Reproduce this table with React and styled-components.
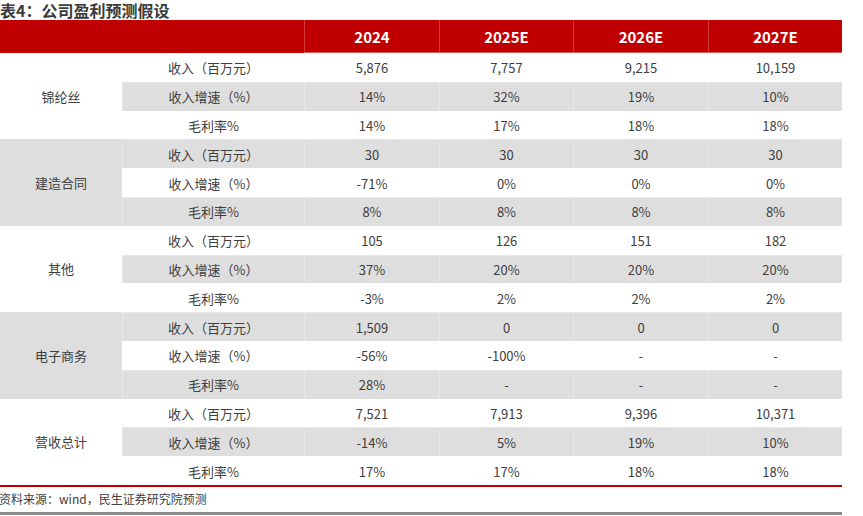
import React from "react";
import styled, { createGlobalStyle } from "styled-components";

const GlobalStyle = createGlobalStyle`
	html, body {
		margin: 0;
		padding: 0;
		background: #ffffff;
	}
	body {
		font-family: "Noto Sans CJK SC", "Noto Sans", sans-serif;
		color: #404040;
	}
`;

const GREY = "#dedede";
const RED = "#c00000";

const Page = styled.div`
	width: 842px;
	display: flex;
	flex-direction: column;
`;

const Title = styled.div`
	height: 20px;
	display: flex;
	align-items: center;
	font-size: 16px;
	line-height: 1;
	font-weight: 700;
	color: #3a3a3a;
	white-space: nowrap;
`;

const Grid = styled.div`
	display: grid;
	grid-template-columns: 122px 182px 135px 134px 135px 134px;
	grid-template-rows: 33px repeat(15, 28.8px);
	border-bottom: 2px solid ${RED};
`;

const HeadCell = styled.div`
	background: ${RED};
	color: #ffffff;
	font-size: 15px;
	font-weight: 700;
	display: flex;
	align-items: center;
	justify-content: center;
	border-left: ${props => (props.first ? "none" : "1px solid #d23a3a")};
	border-bottom: ${props => (props.first ? "none" : "1px solid #e06060")};
`;

const GroupCell = styled.div`
	grid-row: span 3;
	background: ${props => (props.shade ? GREY : "#ffffff")};
	font-size: 13px;
	display: flex;
	align-items: center;
	justify-content: center;
`;

const Cell = styled.div`
	background: ${props => (props.shade ? GREY : "#ffffff")};
	font-size: 13px;
	display: flex;
	align-items: center;
	justify-content: center;
	border-left: 1px solid ${props => (props.shade ? "#e6e6e6" : "#ffffff")};
	border-top: 1px solid ${props => (props.shade ? "#e8e8e8" : "#ffffff")};
	box-sizing: border-box;
	white-space: nowrap;
`;

const Source = styled.div`
	height: 25px;
	line-height: 24px;
	margin-left: -1px;
	font-size: 12px;
	color: #404040;
	white-space: nowrap;
`;

const BottomRule = styled.div`
	height: 3px;
	background: #8c8c8c;
`;

const years = ["2024", "2025E", "2026E", "2027E"];
const metrics = ["收入（百万元）", "收入增速（%）", "毛利率%"];

const groups = [
	{
		name: "锦纶丝",
		rows: [
			["5,876", "7,757", "9,215", "10,159"],
			["14%", "32%", "19%", "10%"],
			["14%", "17%", "18%", "18%"],
		],
	},
	{
		name: "建造合同",
		rows: [
			["30", "30", "30", "30"],
			["-71%", "0%", "0%", "0%"],
			["8%", "8%", "8%", "8%"],
		],
	},
	{
		name: "其他",
		rows: [
			["105", "126", "151", "182"],
			["37%", "20%", "20%", "20%"],
			["-3%", "2%", "2%", "2%"],
		],
	},
	{
		name: "电子商务",
		rows: [
			["1,509", "0", "0", "0"],
			["-56%", "-100%", "-", "-"],
			["28%", "-", "-", "-"],
		],
	},
	{
		name: "营收总计",
		rows: [
			["7,521", "7,913", "9,396", "10,371"],
			["-14%", "5%", "19%", "10%"],
			["17%", "17%", "18%", "18%"],
		],
	},
];

export default function App() {
	return (
		<Page>
			<GlobalStyle />
			<Title>表4：公司盈利预测假设</Title>
			<Grid>
				<HeadCell first />
				<HeadCell first />
				{years.map(y => (
					<HeadCell key={y}>{y}</HeadCell>
				))}
				{groups.map((g, gi) => {
					const groupShade = gi % 2 === 1;
					return (
						<React.Fragment key={g.name}>
							<GroupCell shade={groupShade}>{g.name}</GroupCell>
							{g.rows.map((row, ri) => {
								const shade = ri === 1 ? !groupShade : groupShade;
								return (
									<React.Fragment key={ri}>
										<Cell shade={shade}>{metrics[ri]}</Cell>
										{row.map((v, vi) => (
											<Cell key={vi} shade={shade}>
												{v}
											</Cell>
										))}
									</React.Fragment>
								);
							})}
						</React.Fragment>
					);
				})}
			</Grid>
			<Source>资料来源：wind，民生证券研究院预测</Source>
			<BottomRule />
		</Page>
	);
}
